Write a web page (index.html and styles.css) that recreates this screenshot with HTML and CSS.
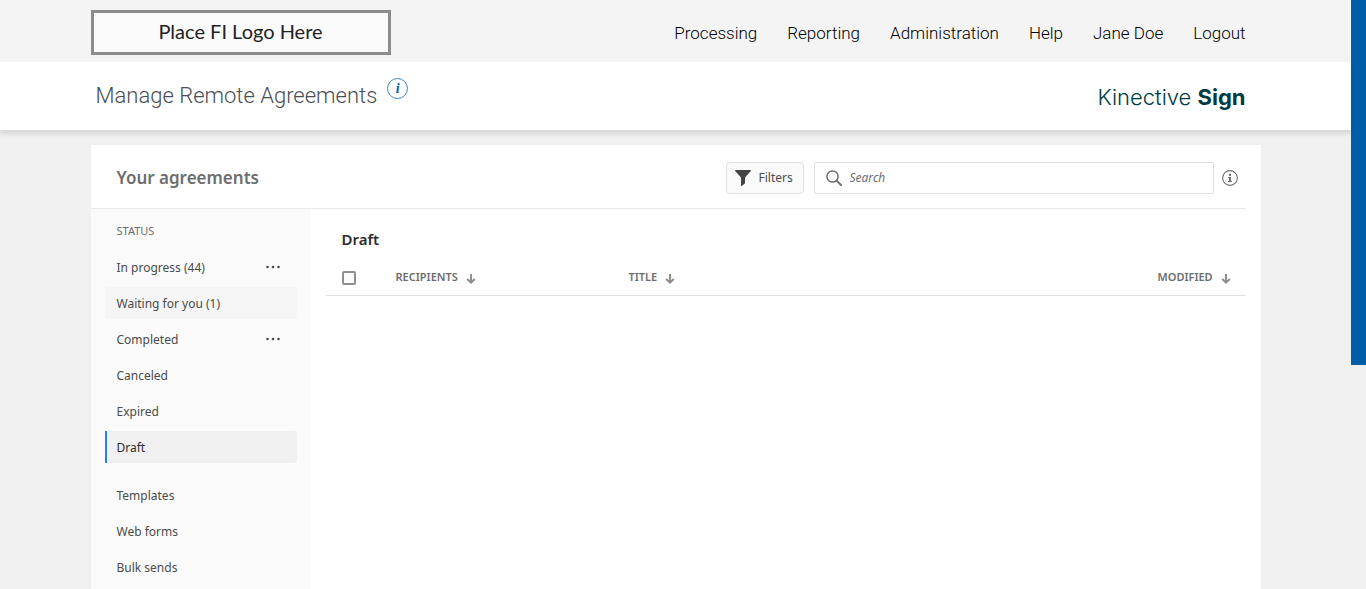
FILE: index.html
```
<!DOCTYPE html>
<html lang="en">
   <head>
      <meta charset="UTF-8">
      <meta name="viewport" content="width=device-width, initial-scale=1.0">
      <title>Manage Remote Agreements</title>
      <link rel="stylesheet" href="styles.css">
   </head>
   <body>
      <div class="page">
         <header class="top-bar">
            <div class="container">
               <div class="fi-logo">Place FI Logo Here</div>
               <nav class="main-nav">
                  <a href="#">Processing</a>
                  <a href="#">Reporting</a>
                  <a href="#">Administration</a>
                  <a href="#">Help</a>
                  <a href="#">Jane Doe</a>
                  <a href="#">Logout</a>
               </nav>
            </div>
         </header>
         <div class="title-bar">
            <div class="container">
               <div class="title-group">
                  <h1>Manage Remote Agreements</h1>
                  <button class="title-info" aria-label="About this page">i</button>
               </div>
               <div class="brand">Kinective <b>Sign</b></div>
            </div>
         </div>
         <main class="card">
            <div class="card-header">
               <h2>Your agreements</h2>
               <button class="filter-button">
                  <svg width="16" height="16" viewBox="0 0 16 16" aria-hidden="true">
                     <path d="M0.6 0h14.8c0.5 0 0.7 0.6 0.4 1L10 7.4v5.8L6.8 16c-0.3 0.2-0.8 0-0.8-0.5V7.4L0.2 1c-0.3-0.4-0.1-1 0.4-1z" fill="#444"/>
                  </svg>
                  Filters
               </button>
               <div class="search-box">
                  <svg width="16" height="16" viewBox="0 0 16 16" fill="none" stroke="#6e6e6e" aria-hidden="true">
                     <circle cx="6.5" cy="6.5" r="5.6" stroke-width="1.5"/>
                     <path d="M10.6 10.6l4.4 4.4" stroke-width="2" stroke-linecap="round"/>
                  </svg>
                  <input type="text" placeholder="Search" aria-label="Search">
               </div>
               <button class="icon-button" aria-label="Search help">
                  <svg width="16" height="16" viewBox="0 0 16 16" aria-hidden="true">
                     <circle cx="8" cy="8" r="7.4" fill="none" stroke="#6e6e6e" stroke-width="1.1"/>
                     <circle cx="8" cy="4.8" r="1.2" fill="#6e6e6e"/>
                     <path d="M6 7h3v4h1v1H6v-1h1V8H6z" fill="#6e6e6e"/>
                  </svg>
               </button>
            </div>
            <div class="card-body">
               <aside class="sidebar">
                  <h3>STATUS</h3>
                  <ul>
                     <li>
                        <a href="#">In progress (44)</a>
                        <button class="more" aria-label="More in progress options">
                           <svg width="16" height="4" viewBox="0 0 16 4" fill="#4b4b4b"><circle cx="2.5" cy="2" r="1.3"/><circle cx="8" cy="2" r="1.3"/><circle cx="13.5" cy="2" r="1.3"/></svg>
                        </button>
                     </li>
                     <li class="hovered"><a href="#">Waiting for you (1)</a></li>
                     <li>
                        <a href="#">Completed</a>
                        <button class="more" aria-label="More completed options">
                           <svg width="16" height="4" viewBox="0 0 16 4" fill="#4b4b4b"><circle cx="2.5" cy="2" r="1.3"/><circle cx="8" cy="2" r="1.3"/><circle cx="13.5" cy="2" r="1.3"/></svg>
                        </button>
                     </li>
                     <li><a href="#">Canceled</a></li>
                     <li><a href="#">Expired</a></li>
                     <li class="active"><a href="#">Draft</a></li>
                  </ul>
                  <ul>
                     <li><a href="#">Templates</a></li>
                     <li><a href="#">Web forms</a></li>
                     <li><a href="#">Bulk sends</a></li>
                  </ul>
               </aside>
               <section class="content">
                  <h2>Draft</h2>
                  <table class="agreements">
                     <thead>
                        <tr>
                           <th class="col-check"><input type="checkbox" aria-label="Select all"></th>
                           <th class="col-recipients">
                              <button class="sort">RECIPIENTS
                                 <svg width="10" height="10" viewBox="0 0 10 10" fill="none" stroke="#8e8e8e" stroke-width="2"><path d="M5 0v8.5M1.2 5L5 8.6 8.8 5"/></svg>
                              </button>
                           </th>
                           <th>
                              <button class="sort">TITLE
                                 <svg width="10" height="10" viewBox="0 0 10 10" fill="none" stroke="#8e8e8e" stroke-width="2"><path d="M5 0v8.5M1.2 5L5 8.6 8.8 5"/></svg>
                              </button>
                           </th>
                           <th class="col-modified">
                              <button class="sort">MODIFIED
                                 <svg width="10" height="10" viewBox="0 0 10 10" fill="none" stroke="#8e8e8e" stroke-width="2"><path d="M5 0v8.5M1.2 5L5 8.6 8.8 5"/></svg>
                              </button>
                           </th>
                        </tr>
                     </thead>
                  </table>
               </section>
            </div>
         </main>
      </div>
      <div class="edge-bar"></div>
   </body>
</html>
```
FILE: styles.css
```
* {
box-sizing: border-box;
}
body {
display: flex;
margin: 0;
min-height: 100vh;
font-family: "Noto Sans", sans-serif;
font-size: 12px;
color: #4b4b4b;
background-color: #f0f0f0;
}
h1, h2, h3, ul {
margin: 0;
padding: 0;
}
a {
color: inherit;
text-decoration: none;
}
button {
padding: 0;
font: inherit;
color: inherit;
background: none;
border: none;
cursor: pointer;
}
svg {
display: block;
flex: none;
}
.page {
flex: 1;
display: flex;
flex-direction: column;
}
.edge-bar {
width: 15px;
height: 365px;
background-color: #005da6;
}
.container {
display: flex;
align-items: center;
justify-content: space-between;
width: 100%;
max-width: 1170px;
height: 100%;
margin: 0 auto;
}

/* Header */
.top-bar {
height: 62px;
padding-bottom: 2px;
background-color: #f4f4f4;
}
.fi-logo {
width: 300px;
height: 45px;
margin-top: 4px;
border: 3px solid #8c8c8c;
background-color: #fafafa;
color: #222;
font-family: Lato, sans-serif;
font-size: 20px;
line-height: 36px;
text-align: center;
}
.main-nav {
display: flex;
gap: 30px;
margin-top: 6px;
padding-right: 15px;
font-family: Roboto, sans-serif;
font-size: 17px;
font-weight: 300;
color: #000;
}
.title-bar {
height: 68px;
background-color: #fff;
box-shadow: 0 4px 4px rgba(0, 0, 0, 0.1);
z-index: 1;
}
.title-group {
display: flex;
align-items: flex-start;
gap: 10px;
padding-left: 5px;
}
.title-group h1 {
font-family: Roboto, sans-serif;
font-size: 22px;
font-weight: 300;
line-height: 36px;
color: #4b4e55;
}
.title-info {
width: 21px;
height: 21px;
border: 1px solid #4088be;
border-radius: 50%;
color: #005da6;
font: italic bold 14px/18px "Liberation Serif", serif;
}
.brand {
padding: 2px 15px 0 0;
font-family: Inter, sans-serif;
font-size: 22px;
font-weight: 300;
color: #003b40;
}
.brand b {
font-weight: 700;
}

/* Agreements card */
.card {
flex: 1;
display: flex;
flex-direction: column;
width: 100%;
max-width: 1170px;
margin: 15px auto 0;
padding-right: 15px;
background-color: #fff;
}
.card-header {
display: flex;
align-items: center;
height: 64px;
padding: 2px 8px 0 26px;
border-bottom: 1px solid #eaeaea;
}
.card-header h2 {
flex: 1;
font-size: 17px;
font-weight: 600;
color: #6e6e6e;
}
.filter-button {
display: flex;
align-items: center;
gap: 8px;
width: 78px;
height: 32px;
margin-right: 10px;
padding-left: 8px;
border: 1px solid #e1e1e1;
border-radius: 4px;
background-color: #fafafa;
}
.search-box {
display: flex;
align-items: center;
gap: 8px;
width: 400px;
height: 32px;
margin-right: 8px;
padding-left: 11px;
border: 1px solid #e1e1e1;
border-radius: 2px;
}
.search-box input {
flex: 1;
padding: 0;
border: none;
outline: none;
font: inherit;
}
.search-box input::placeholder {
color: #6e6e6e;
font-style: italic;
}
.card-body {
flex: 1;
display: flex;
}
.sidebar {
width: 220px;
padding: 14px 14px 6px;
background-color: #fafafa;
}
.sidebar h3 {
margin-bottom: 12px;
padding-left: 12px;
font-size: 11px;
font-weight: 400;
line-height: 16px;
color: #6e6e6e;
}
.sidebar ul {
display: flex;
flex-direction: column;
gap: 4px;
margin-bottom: 16px;
list-style: none;
}
.sidebar ul:last-child {
margin-bottom: 0;
}
.sidebar li {
display: flex;
align-items: center;
justify-content: space-between;
height: 32px;
padding: 0 16px 0 10px;
border-left: 2px solid transparent;
border-radius: 0 4px 4px 0;
}
.sidebar .hovered {
background-color: #f5f5f5;
}
.sidebar .active {
border-left-color: #2680eb;
background-color: #f0f0f0;
color: #2c2c2c;
}
.content {
flex: 1;
padding: 18px 0 0 15px;
}
.content h2 {
padding-left: 16px;
font-size: 15px;
font-weight: 600;
line-height: 24px;
color: #2c2c2c;
}
.agreements {
width: 100%;
margin-top: 8px;
table-layout: fixed;
border-collapse: collapse;
}
.agreements th {
height: 36px;
padding: 0;
border-bottom: 1px solid #e1e1e1;
text-align: left;
}
.col-check {
width: 70px;
}
.col-recipients {
width: 233px;
}
.col-modified {
width: 88px;
}
.agreements input {
appearance: none;
display: block;
width: 14px;
height: 14px;
margin: 2px 0 0 16px;
border: 2px solid #8e8e8e;
border-radius: 2px;
background-color: #fafafa;
}
.sort {
display: flex;
align-items: center;
gap: 8px;
font-size: 11px;
font-weight: 600;
color: #6e6e6e;
}
.sort svg {
margin-top: 4px;
}
```
